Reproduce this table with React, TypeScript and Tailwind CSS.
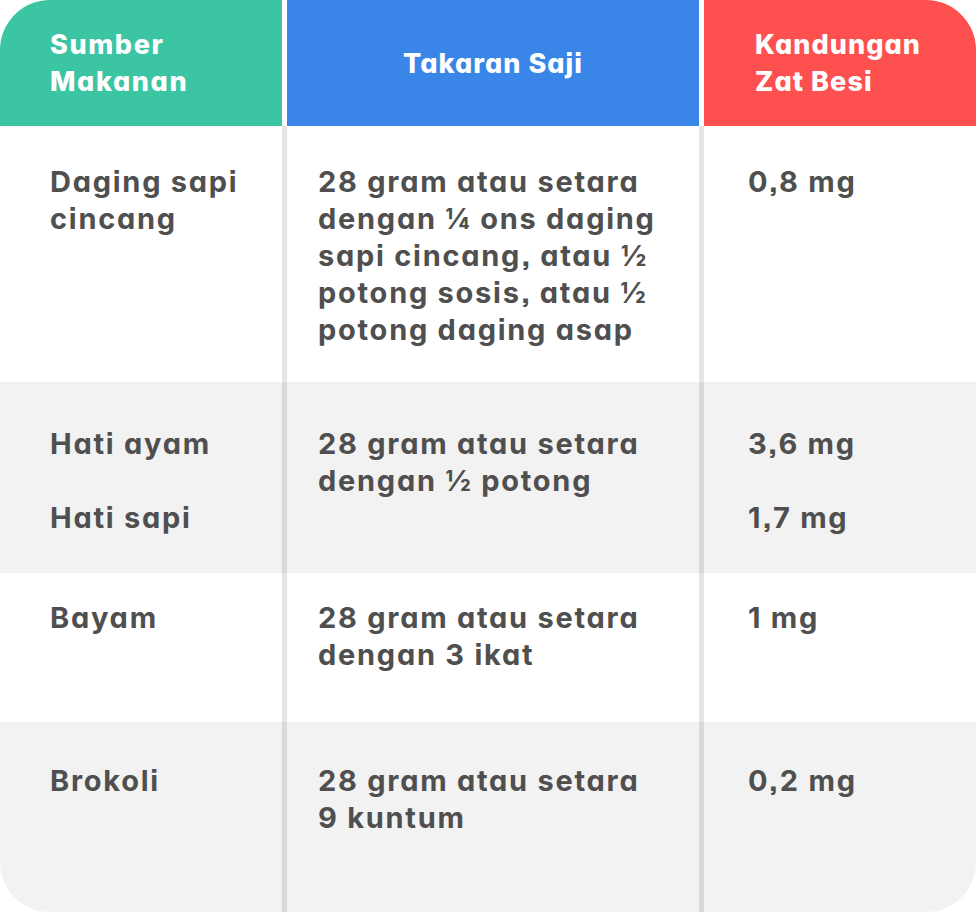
const rows = [
  {
    bg: "bg-white",
    h: "h-[256px]",
    pt: "pt-[37px]",
    food: [["Daging sapi", "cincang"]],
    serving: [
      "28 gram atau setara",
      "dengan ¼ ons daging",
      "sapi cincang, atau ½",
      "potong sosis, atau ½",
      "potong daging asap",
    ],
    iron: ["0,8 mg"],
  },
  {
    bg: "bg-[#f2f2f2]",
    h: "h-[191px]",
    pt: "pt-[43px]",
    food: [["Hati ayam"], ["Hati sapi"]],
    serving: ["28 gram atau setara", "dengan ½ potong"],
    iron: ["3,6 mg", "1,7 mg"],
  },
  {
    bg: "bg-white",
    h: "h-[149px]",
    pt: "pt-[26px]",
    food: [["Bayam"]],
    serving: ["28 gram atau setara", "dengan 3 ikat"],
    iron: ["1 mg"],
  },
  {
    bg: "bg-[#f2f2f2]",
    h: "h-[190px]",
    pt: "pt-[40px]",
    food: [["Brokoli"]],
    serving: ["28 gram atau setara", "9 kuntum"],
    iron: ["0,2 mg"],
  },
];

export default function App() {
  return (
    <div
      className="w-[976px] h-[912px] overflow-hidden rounded-[50px] text-[#4f4f4f] [font-feature-settings:'cv11'_1,'ss07'_1]"
      style={{ fontFamily: '"Inter", "Lato", sans-serif' }}
    >
      {/* header */}
      <div className="flex h-[126px] font-extrabold text-white text-[27px] leading-[37px] tracking-[0.06em]">
        <div className="w-[287px] border-r-[5px] border-white bg-[#3cc5a3] pl-[50px] flex flex-col justify-center">
          <span>Sumber</span>
          <span>Makanan</span>
        </div>
        <div className="w-[417px] border-r-[5px] border-white bg-[#3a86e8] flex items-center justify-center tracking-[0.04em]">
          Takaran Saji
        </div>
        <div className="flex-1 bg-[#ff5050] pl-[51px] flex flex-col justify-center tracking-[0.04em]">
          <span>Kandungan</span>
          <span>Zat Besi</span>
        </div>
      </div>
      {/* body */}
      {rows.map((r) => (
        <div
          key={r.serving.join()}
          className={`flex ${r.bg} ${r.h} font-bold text-[29px] leading-[37px] tracking-[0.06em]`}
        >
          <div className={`w-[287px] border-r-[5px] border-black/10 pl-[50px] ${r.pt} flex flex-col gap-[37px]`}>
            {r.food.map((f) => (
              <p key={f.join()}>
                {f.map((l) => (
                  <span key={l} className="block">{l}</span>
                ))}
              </p>
            ))}
          </div>
          <div className={`w-[417px] border-r-[5px] border-black/10 pl-[31px] ${r.pt}`}>
            {r.serving.map((l) => (
              <p key={l} className="whitespace-nowrap">{l}</p>
            ))}
          </div>
          <div className={`flex-1 pl-[44px] ${r.pt} flex flex-col gap-[37px]`}>
            {r.iron.map((f) => (
              <p key={f}>{f}</p>
            ))}
          </div>
        </div>
      ))}
    </div>
  );
}
